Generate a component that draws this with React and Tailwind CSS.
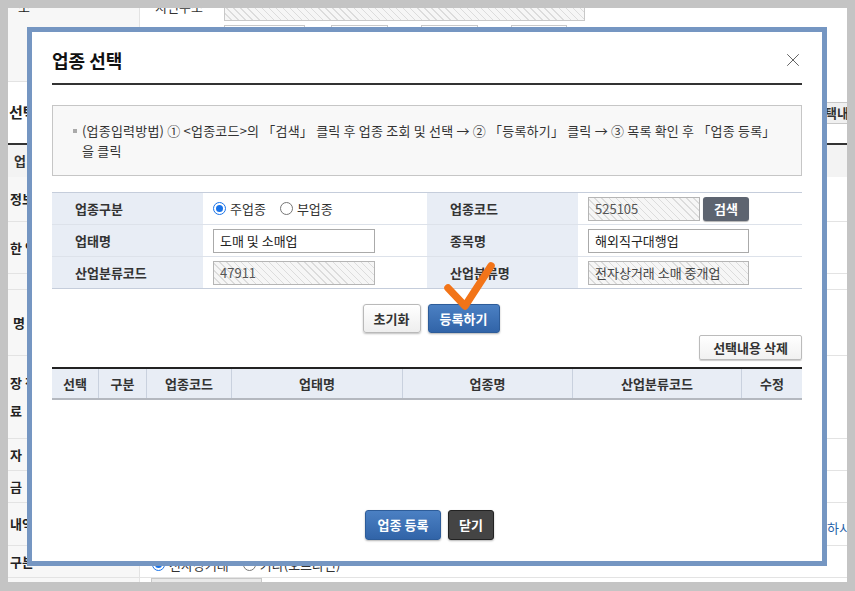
import React from 'react';
import { X } from 'lucide-react';

const font = { fontFamily: '"Noto Sans CJK KR", "Noto Sans", "Liberation Sans", sans-serif' };

const hatch =
  'bg-[#f6f6f6] bg-[image:repeating-linear-gradient(45deg,#f6f6f6_0px,#f6f6f6_4px,#dcdcdc_4px,#dcdcdc_5px)]';

const Radio = ({ checked, label }) => (
  <label className="flex items-center gap-[4px] text-[13px] text-[#333]">
    <span
      className={
        'flex h-[13px] w-[13px] items-center justify-center rounded-full border ' +
        (checked ? 'border-[#1a73e8]' : 'border-[#767676]')
      }
    >
      {checked && <span className="h-[7px] w-[7px] rounded-full bg-[#1a73e8]" />}
    </span>
    {label}
  </label>
);

const BgRow = ({ h, label, className = '', children }) => (
  <div className={'flex shrink-0 border-b border-[#e3e3e3] ' + h + ' ' + className}>
    <div className="flex w-[132px] shrink-0 flex-col justify-center border-r border-[#e3e3e3] bg-[#f7f7f7] pl-[2px] text-[13px] font-bold leading-[28px] text-[#222]">
      {label}
    </div>
    <div className="flex flex-1 items-center">{children}</div>
  </div>
);

const FormLabel = ({ children }) => (
  <div className="flex w-[151px] shrink-0 items-center bg-[#e8edf5] pl-[23px] text-[13px] font-bold text-[#333]">
    {children}
  </div>
);

const HeadCell = ({ w, children, last }) => (
  <div
    className={
      'flex h-full shrink-0 items-center justify-center text-[13px] font-bold text-[#333] ' +
      w +
      (last ? '' : ' border-r border-[#c9d1de]')
    }
  >
    {children}
  </div>
);

export default function App() {
  return (
    <div className="relative h-[591px] w-[855px] overflow-hidden bg-[#c4c4c4] px-[8px] pt-[8px] pb-[9px]" style={font}>
      {/* page behind the modal */}
      <div className="flex h-full flex-col overflow-hidden bg-white">
        <div className="flex h-[74px] shrink-0">
          <div className="w-[132px] shrink-0 border-r border-[#e3e3e3] border-b bg-[#f7f7f7] pl-[10px] text-[13px] leading-[16px] text-[#222]">
            <div className="-mt-[9px]">소</div>
          </div>
          <div className="flex flex-1 flex-col">
            <div className="flex">
              <div className="-mt-[9px] w-[84px] pl-[15px] text-[13px] leading-[16px] text-[#333]">지번주소</div>
              <div className={'h-[13px] w-[361px] border border-t-0 border-[#c8c8c8] ' + hatch} />
            </div>
            <div className="ml-[84px] mt-[4px] flex">
              <div className="h-[20px] w-[81px] border border-[#c8c8c8]" />
              <div className="ml-[26px] h-[20px] w-[57px] border border-[#c8c8c8]" />
              <div className="ml-[33px] h-[20px] w-[57px] border border-[#c8c8c8]" />
              <div className="ml-[33px] h-[20px] w-[56px] border border-[#c8c8c8]" />
            </div>
          </div>
        </div>
        <div className="flex h-[61px] shrink-0 items-center justify-between">
          <div className="pl-[1px] text-[15px] font-bold text-[#222]">선택</div>
          <div className="-mr-[23px] flex h-[22px] items-center border border-[#c8c8c8] bg-[#f0f0f0] px-[8px] text-[13px] font-bold text-[#333]">
            선택내역
          </div>
        </div>
        <div className="flex h-[34px] shrink-0 items-center border-t-2 border-[#333] bg-[#f3f3f3] pl-[6px] text-[13px] font-bold text-[#333]">
          업
        </div>
        <BgRow h="h-[45px]" label="정보" />
        <BgRow h="h-[52px]" label="한 업" />
        <BgRow h="h-[16px]" label="" />
        <BgRow h="h-[66px]" label={<span className="pl-[3px]">명</span>} />
        <BgRow
          h="h-[83px]"
          label={
            <>
              <span>장 정</span>
              <span>료</span>
            </>
          }
        />
        <BgRow h="h-[32px]" label="자" />
        <BgRow h="h-[32px]" label="금" />
        <BgRow h="h-[43px]" label="내역">
          <span className="ml-auto -mr-[4px] pt-[8px] text-[13px] text-[#1f5fa8]">확인하시</span>
        </BgRow>
        <BgRow h="h-[32px]" label="구분">
          <div className="flex items-center gap-[14px] pl-[12px] pt-[6px]">
            <Radio checked label="전자상거래" />
            <Radio label="기타(오프라인)" />
          </div>
        </BgRow>
        <div className="flex flex-1">
          <div className="w-[132px] shrink-0 border-r border-[#e3e3e3] bg-[#f7f7f7]" />
          <div className="ml-[11px] h-[20px] w-[111px] border border-[#c8c8c8] bg-[#e9e9e9]" />
        </div>
      </div>

      {/* modal */}
      <div className="absolute left-[27px] top-[27px] flex h-[539px] w-[800px] flex-col border-[5px] border-[#7596c2] bg-white px-[20px]">
        <div className="flex shrink-0 items-start justify-between border-b-2 border-[#333] pt-[16px] pb-[11px]">
          <h2 className="text-[18px] font-bold leading-[24px] text-[#111]">업종 선택</h2>
          <X className="-mr-[2px] mt-[1px] h-[22px] w-[22px] text-[#555]" strokeWidth={1} />
        </div>

        <div className="mt-[20px] flex h-[71px] shrink-0 border border-[#c6c6c6] bg-[#f8f8f8] pl-[20px] pt-[15px]">
          <span className="mr-[5px] mt-[8px] h-[4px] w-[4px] shrink-0 bg-[#aaa]" />
          <p className="text-[13px] leading-[20px] tracking-[0.2px] text-[#333]">
            <span className="whitespace-nowrap">
              (업종입력방법) ① &lt;업종코드&gt;의 「검색」 클릭 후 업종 조회 및 선택 → ② 「등록하기」 클릭 → ③ 목록 확인 후 「업종 등록」
            </span>
            <br />
            을 클릭
          </p>
        </div>

        <div className="mt-[16px] shrink-0 border-t border-[#c5cddb]">
          <div className="flex h-[32px] border-b border-[#dde2ea]">
            <FormLabel>업종구분</FormLabel>
            <div className="flex w-[224px] shrink-0 items-center gap-[14px] pl-[10px]">
              <Radio checked label="주업종" />
              <Radio label="부업종" />
            </div>
            <FormLabel>업종코드</FormLabel>
            <div className="flex flex-1 items-center gap-[3px] pl-[10px]">
              <div className={'flex h-[24px] w-[112px] items-center border border-[#b5b5b5] pl-[6px] text-[13px] text-[#555] ' + hatch}>
                525105
              </div>
              <button className="h-[24px] w-[46px] rounded-[3px] bg-[#5d6470] text-[13px] font-bold text-white shadow-[0_1px_1px_rgba(0,0,0,0.3)]">
                검색
              </button>
            </div>
          </div>
          <div className="flex h-[32px] border-b border-[#dde2ea]">
            <FormLabel>업태명</FormLabel>
            <div className="flex w-[224px] shrink-0 items-center pl-[10px]">
              <div className="flex h-[24px] w-[162px] items-center border border-[#aaa] pl-[6px] text-[13px] text-[#222]">
                도매 및 소매업
              </div>
            </div>
            <FormLabel>종목명</FormLabel>
            <div className="flex flex-1 items-center pl-[10px]">
              <div className="flex h-[24px] w-[161px] items-center border border-[#aaa] pl-[6px] text-[13px] text-[#222]">
                해외직구대행업
              </div>
            </div>
          </div>
          <div className="flex h-[32px] border-b border-[#c5cddb]">
            <FormLabel>산업분류코드</FormLabel>
            <div className="flex w-[224px] shrink-0 items-center pl-[10px]">
              <div className={'flex h-[24px] w-[162px] items-center border border-[#b5b5b5] pl-[6px] text-[13px] text-[#555] ' + hatch}>
                47911
              </div>
            </div>
            <FormLabel>산업분류명</FormLabel>
            <div className="flex flex-1 items-center pl-[10px]">
              <div className={'flex h-[24px] w-[161px] items-center border border-[#b5b5b5] pl-[6px] text-[13px] text-[#444] ' + hatch}>
                전자상거래 소매 중개업
              </div>
            </div>
          </div>
        </div>

        <div className="mt-[15px] flex shrink-0 justify-center gap-[7px] pl-[8px]">
          <button className="h-[29px] w-[58px] rounded-[3px] border border-[#b9b9b9] bg-gradient-to-b from-white to-[#eeeeee] text-[13px] font-bold text-[#333] shadow-[0_1px_2px_rgba(0,0,0,0.25)]">
            초기화
          </button>
          <button className="h-[29px] w-[72px] rounded-[3px] border border-[#2d5c99] bg-gradient-to-b from-[#4b80c3] to-[#3164a8] text-[13px] font-bold text-white shadow-[0_1px_2px_rgba(0,0,0,0.3)]">
            등록하기
          </button>
        </div>

        <div className="mt-[2px] flex shrink-0 justify-end">
          <button className="h-[25px] w-[103px] rounded-[2px] border border-[#bbb] bg-gradient-to-b from-white to-[#f1f1f1] text-[13px] font-bold text-[#333] shadow-[0_1px_1px_rgba(0,0,0,0.2)]">
            선택내용 삭제
          </button>
        </div>

        <div className="mt-[7px] flex h-[33px] shrink-0 border-t-2 border-b-2 border-t-[#222] border-b-[#b4b8bf] bg-[#e8edf5]">
          <HeadCell w="w-[47px]">선택</HeadCell>
          <HeadCell w="w-[48px]">구분</HeadCell>
          <HeadCell w="w-[85px]">업종코드</HeadCell>
          <HeadCell w="w-[171px]">업태명</HeadCell>
          <HeadCell w="w-[170px]">업종명</HeadCell>
          <HeadCell w="w-[169px]">산업분류코드</HeadCell>
          <HeadCell w="w-[60px]" last>
            수정
          </HeadCell>
        </div>

        <div className="mt-auto flex shrink-0 justify-center gap-[7px] pb-[21px] pl-[5px]">
          <button className="h-[30px] w-[76px] rounded-[3px] border border-[#2d5c99] bg-gradient-to-b from-[#4b80c3] to-[#3164a8] text-[13px] font-bold text-white shadow-[0_1px_2px_rgba(0,0,0,0.3)]">
            업종 등록
          </button>
          <button className="h-[30px] w-[46px] rounded-[3px] border border-[#222] bg-[#444] text-[13px] font-bold text-white shadow-[0_1px_2px_rgba(0,0,0,0.3)]">
            닫기
          </button>
        </div>
      </div>

      {/* orange check mark drawn over the register button */}
      <svg className="absolute left-[440px] top-[259px]" width="58" height="54" viewBox="0 0 58 54">
        <polyline
          points="8,29 25,47 51,7"
          fill="none"
          stroke="#f27418"
          strokeWidth="7.5"
          strokeLinecap="round"
          strokeLinejoin="round"
        />
      </svg>
    </div>
  );
}
